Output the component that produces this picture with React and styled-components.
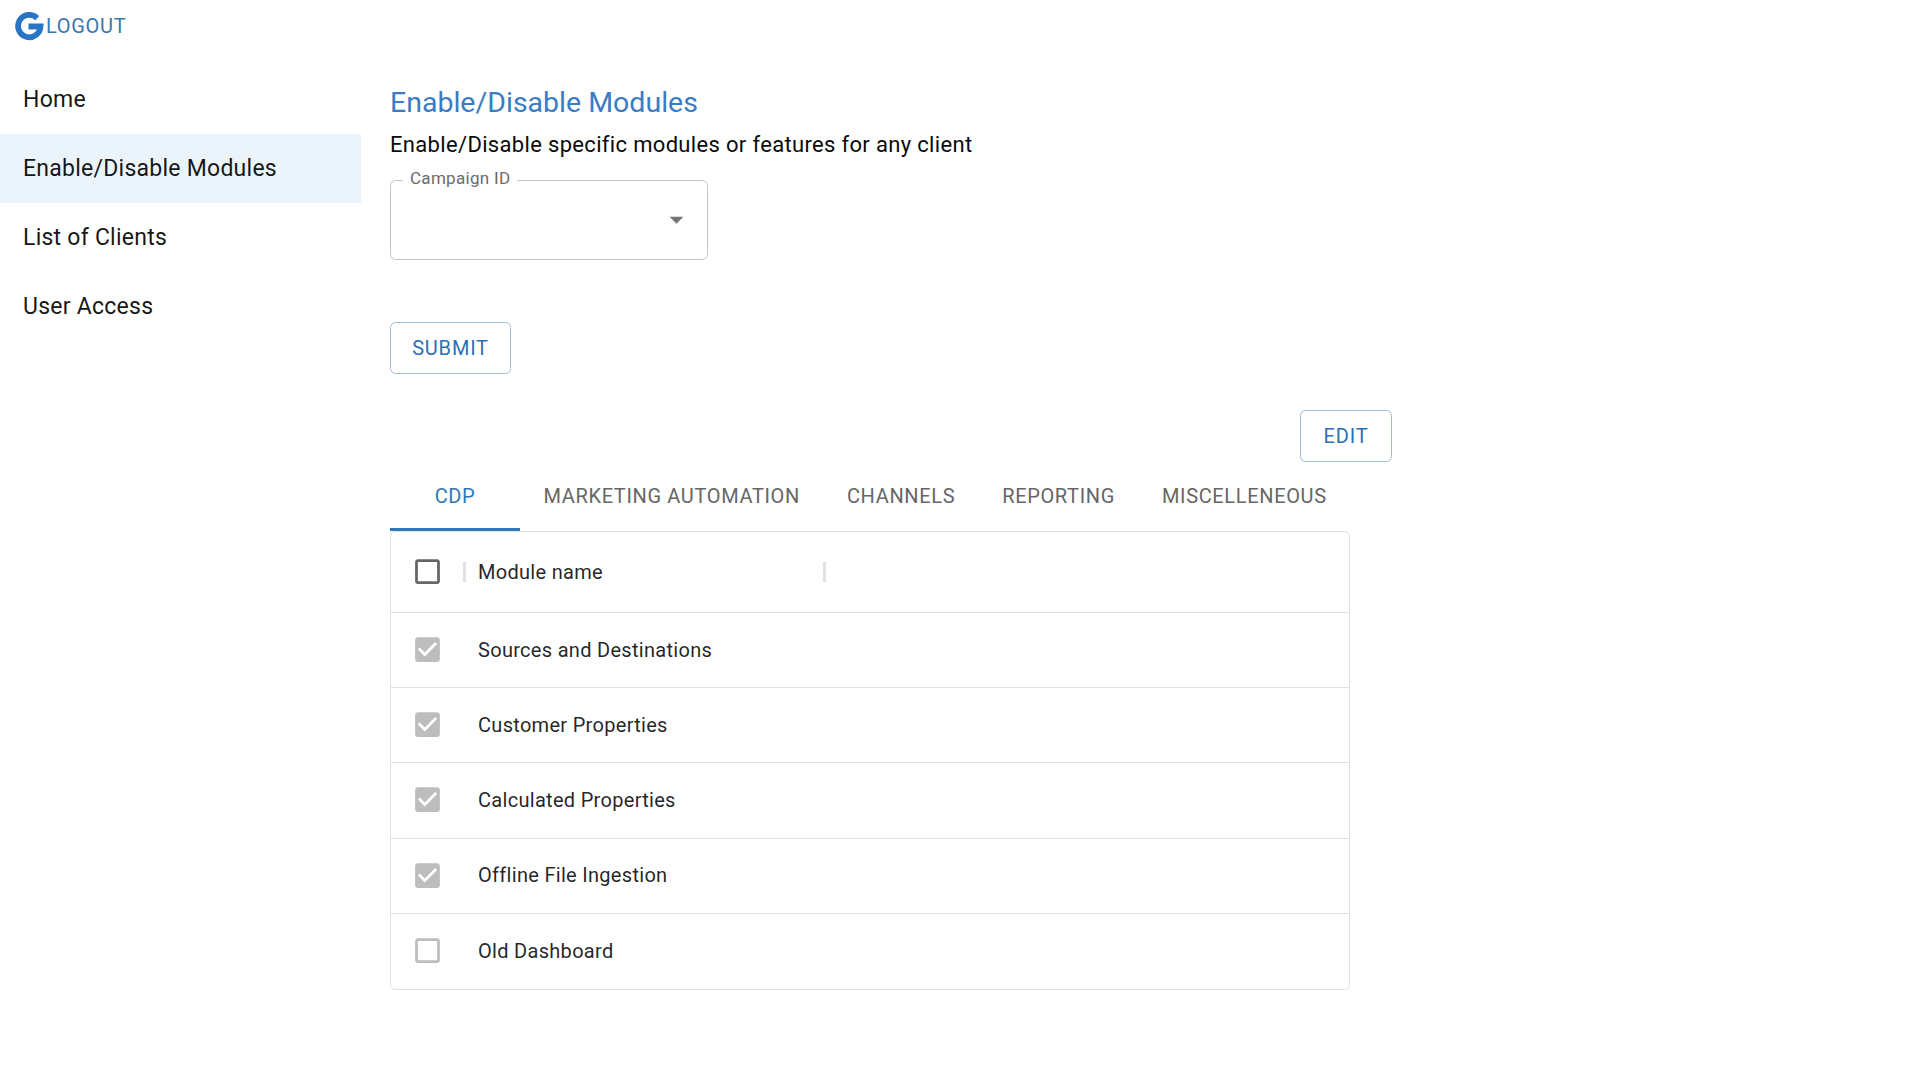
import React from "react";
import styled, { createGlobalStyle } from "styled-components";

const Global = createGlobalStyle`
  html, body { margin: 0; padding: 0; background: #fff; }
  body { font-family: Roboto, "Liberation Sans", sans-serif; color: #000; }
  * { box-sizing: border-box; }
`;
const Page = styled.div`display: flex; width: 1920px; height: 1080px; overflow: hidden; background: #fff;`;
const Sidebar = styled.aside`width: 361px; flex: none; display: flex; flex-direction: column;`;
const Brand = styled.div`height: 65px; display: flex; align-items: flex-start; padding: 12px 0 0 15px;`;
const LogoutLink = styled.a`font-size: 20px; line-height: 28px; letter-spacing: 0.7px; color: #3b76ad; margin-left: 1px;`;
const NavList = styled.nav`display: flex; flex-direction: column;`;
const NavItem = styled.div`
  height: 69px; display: flex; align-items: center; padding: 0 0 0 23px;
  font-size: 23px; line-height: 33px; letter-spacing: 0.25px; color: rgba(0,0,0,.92);
  background: ${p => (p.$active ? "#ebf3fb" : "transparent")};
`;
const Main = styled.main`width: 1002px; margin-left: 29px; display: flex; flex-direction: column; padding-top: 83px;`;
const Title = styled.h1`margin: 0; font-weight: 400; font-size: 28.5px; line-height: 40px; color: #3a7cc4;`;
const Subtitle = styled.p`margin: 0; font-size: 22px; line-height: 33px; letter-spacing: .33px; height: 47px; padding-top: 5px; color: #0a0a0a;`;
const SelectBox = styled.fieldset`
  margin: 0; padding: 0 24px 0 11px; width: 318px; height: 90px; border: 1px solid #c4c4c4; border-radius: 5.5px;
  display: flex; align-items: center; justify-content: flex-end;
`;
const SelectLegend = styled.legend`margin-left: 1px; padding: 0 7px; font-size: 17px; line-height: 16px; height: 20px; color: #6b6b6b; letter-spacing: .3px;`;
const Arrow = styled.svg`width: 33px; height: 33px; fill: #757575; margin: 13px -10px 0 0;`;
const OutlineButton = styled.button`
  height: 52px; width: ${p => p.$w}px; border: 1px solid #9dbbd8; border-radius: 5.5px; background: #fff;
  color: #2b70b3; font: 400 20px Roboto, sans-serif; letter-spacing: .8px; padding: 0; flex: none;
`;
const SubmitRow = styled.div`margin-top: 62px; display: flex;`;
const EditRow = styled.div`margin-top: 36px; display: flex; justify-content: flex-end;`;
const Tabs = styled.div`display: flex; height: 69px;`;
const Tab = styled.div`
  height: 69px; padding: 2px 23.5px 0; display: flex; align-items: center; justify-content: center;
  min-width: ${p => (p.$active ? "130px" : "0")};
  font-size: 20px; letter-spacing: .65px; color: ${p => (p.$active ? "#2f78b8" : "#666")};
  border-bottom: 3px solid ${p => (p.$active ? "#2f78b8" : "transparent")};
  margin-bottom: -1px;
`;
const Table = styled.div`width: 960px; border: 1px solid #e0e0e0; border-radius: 5.5px; display: flex; flex-direction: column;`;
const HeaderRow = styled.div`height: 81px; display: flex; align-items: center; border-bottom: 1px solid #e0e0e0; padding: 0 0 1px 20px;`;
const Row = styled.div`
  height: 75.2px; display: flex; align-items: center; padding: 0 0 1px 20px;
  border-bottom: ${p => (p.$last ? "none" : "1px solid #e0e0e0")};
`;
const Check = styled.svg`width: 33px; height: 33px; flex: none; fill: ${p => p.$color};`;
const Sep = styled.span`width: 3px; height: 20px; background: #e0e0e0; flex: none; margin-left: ${p => p.$ml}px;`;
const HeadLabel = styled.span`font-size: 20px; letter-spacing: .3px; color: rgba(0,0,0,.87); width: 345px; margin-left: 12px; font-weight: 400;`;
const CellLabel = styled.span`font-size: 20px; letter-spacing: .3px; color: rgba(0,0,0,.87); margin-left: 34px;`;

const BOX = "M19 5v14H5V5h14m0-2H5c-1.1 0-2 .9-2 2v14c0 1.1.9 2 2 2h14c1.1 0 2-.9 2-2V5c0-1.1-.9-2-2-2z";
const CHK = "M19 3H5c-1.11 0-2 .9-2 2v14c0 1.1.89 2 2 2h14c1.11 0 2-.9 2-2V5c0-1.1-.89-2-2-2zm-9 14l-5-5 1.41-1.41L10 14.17l7.59-7.59L19 8l-9 9z";
const Icon = ({ d, color }) => <Check $color={color} viewBox="0 0 24 24"><path d={d} /></Check>;

const Logo = () => (
  <svg width="30" height="30" viewBox="0 0 30 30" fill="none" style={{ flex: "none" }}>
    <path d="M22.2 6.1A11.2 11.2 0 1 0 25.5 14.5H13.5" stroke="#2a74c6" strokeWidth="5.8" />
  </svg>
);

const rows = [
  ["Sources and Destinations", true],
  ["Customer Properties", true],
  ["Calculated Properties", true],
  ["Offline File Ingestion", true],
  ["Old Dashboard", false],
];

export default function App() {
  return (
    <Page>
      <Global />
      <Sidebar>
        <Brand><Logo /><LogoutLink>LOGOUT</LogoutLink></Brand>
        <NavList>
          <NavItem>Home</NavItem>
          <NavItem $active>Enable/Disable Modules</NavItem>
          <NavItem>List of Clients</NavItem>
          <NavItem>User Access</NavItem>
        </NavList>
      </Sidebar>
      <Main>
        <Title>Enable/Disable Modules</Title>
        <Subtitle>Enable/Disable specific modules or features for any client</Subtitle>
        <SelectBox>
          <SelectLegend>Campaign ID</SelectLegend>
          <Arrow viewBox="0 0 24 24"><path d="M7 10l5 5 5-5z" /></Arrow>
        </SelectBox>
        <SubmitRow><OutlineButton $w={121}>SUBMIT</OutlineButton></SubmitRow>
        <EditRow><OutlineButton $w={92}>EDIT</OutlineButton></EditRow>
        <Tabs>
          <Tab $active>CDP</Tab>
          <Tab>MARKETING AUTOMATION</Tab>
          <Tab>CHANNELS</Tab>
          <Tab>REPORTING</Tab>
          <Tab>MISCELLENEOUS</Tab>
        </Tabs>
        <Table>
          <HeaderRow>
            <Icon d={BOX} color="#666" />
            <Sep $ml={19} />
            <HeadLabel>Module name</HeadLabel>
            <Sep $ml={0} />
          </HeaderRow>
          {rows.map(([label, on], i) => (
            <Row key={label} $last={i === rows.length - 1}>
              <Icon d={on ? CHK : BOX} color="#bdbdbd" />
              <CellLabel>{label}</CellLabel>
            </Row>
          ))}
        </Table>
      </Main>
    </Page>
  );
}
